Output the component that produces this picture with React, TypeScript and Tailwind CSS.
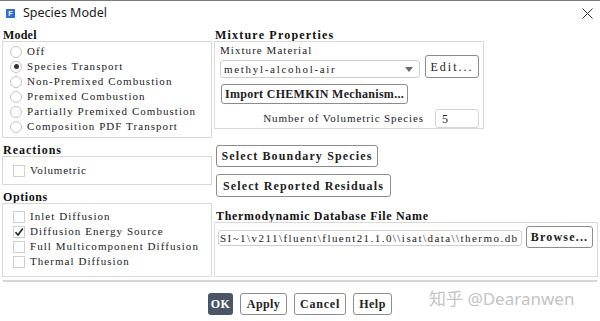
import React from "react";

const txt = "text-[11px] leading-[15px] text-[#222] whitespace-nowrap";

function Radio({ checked, label }: { checked?: boolean; label: string }) {
  return (
    <div className="flex items-center h-[15px]">
      <span className="ml-[7px] w-[12px] h-[12px] rounded-full border border-[#c4c4c4] bg-white flex items-center justify-center">
        {checked && <span className="w-[5px] h-[5px] rounded-full bg-[#333]" />}
      </span>
      <span className={`ml-[5px] tracking-[1.05px] ${txt}`}>{label}</span>
    </div>
  );
}

function Check({
  checked,
  label,
  track = "tracking-[1.05px]",
}: {
  checked?: boolean;
  label: string;
  track?: string;
}) {
  return (
    <div className="flex items-center h-[15px]">
      <span className="ml-[10px] w-[12px] h-[12px] border border-[#cfcfcf] bg-white flex items-center justify-center">
        {checked && (
          <svg width="10" height="10" viewBox="0 0 10 10">
            <path d="M1.5 5.2 L4 8 L8.8 1.5" stroke="#222" strokeWidth="1.6" fill="none" />
          </svg>
        )}
      </span>
      <span className={`ml-[5px] ${track} ${txt}`}>{label}</span>
    </div>
  );
}

function Heading({
  children,
  track,
}: {
  children: React.ReactNode;
  track: string;
}) {
  return (
    <div
      className={`h-[12px] leading-[12px] text-[12px] font-bold text-[#111] pl-[1px] whitespace-nowrap ${track}`}
    >
      {children}
    </div>
  );
}

function Btn({
  children,
  className = "",
}: {
  children: React.ReactNode;
  className?: string;
}) {
  return (
    <div
      className={`flex items-center justify-center border border-[#8c8c8c] rounded-[3px] bg-white text-[#222] whitespace-nowrap ${className}`}
    >
      {children}
    </div>
  );
}

export default function App() {
  return (
    <div className="relative w-[600px] h-[321px] bg-white border-t border-[#7a7a7a] overflow-hidden font-['Liberation_Serif','Times_New_Roman',serif]">
      {/* Title bar */}
      <div className="h-[25px] flex items-center">
        <div className="ml-[6px] w-[9px] h-[9px] bg-[#2f6fd6] flex items-center justify-center text-white text-[7px] font-bold leading-none font-['Liberation_Sans',sans-serif]">
          F
        </div>
        <div className="ml-[8px] text-[12.5px] text-[#1a1a1a] font-['Noto_Sans','Liberation_Sans',sans-serif] leading-none">
          Species Model
        </div>
        <div className="ml-auto mr-[7px]">
          <svg width="11" height="11" viewBox="0 0 11 11">
            <path d="M0.5 0.5 L10.5 10.5 M10.5 0.5 L0.5 10.5" stroke="#333" strokeWidth="1" />
          </svg>
        </div>
      </div>

      {/* Main */}
      <div className="flex pt-[3px] pl-[2px]">
        {/* Left column */}
        <div className="w-[210px] flex flex-col">
          <Heading track="tracking-[0.2px]">Model</Heading>
          <div className="h-[97px] border border-[#d9d9d9] pt-[2px]">
            <Radio label="Off" />
            <Radio checked label="Species Transport" />
            <Radio label="Non-Premixed Combustion" />
            <Radio label="Premixed Combustion" />
            <Radio label="Partially Premixed Combustion" />
            <Radio label="Composition PDF Transport" />
          </div>
          <div className="mt-[6px]">
            <Heading track="tracking-[1px]">Reactions</Heading>
          </div>
          <div className="h-[29px] border border-[#d9d9d9] flex items-center">
            <Check label="Volumetric" track="tracking-[0.8px]" />
          </div>
          <div className="mt-[6px]">
            <Heading track="tracking-[0.6px]">Options</Heading>
          </div>
          <div className="h-[74px] border border-[#d9d9d9] pt-[5px]">
            <Check label="Inlet Diffusion" />
            <Check checked label="Diffusion Energy Source" />
            <Check label="Full Multicomponent Diffusion" />
            <Check label="Thermal Diffusion" />
          </div>
        </div>

        {/* Right column */}
        <div className="ml-[2px] w-[384px] flex flex-col">
          <Heading track="tracking-[1.2px]">Mixture Properties</Heading>
          <div className="w-[270px] h-[88px] border border-[#d9d9d9] flex flex-col">
            <div className="pl-[5px] mt-[2px] text-[11px] tracking-[1.05px] leading-[12px] text-[#222]">
              Mixture Material
            </div>
            <div className="flex items-end pl-[5px] -mt-[1px]">
              <div className="w-[200px] h-[18px] border border-[#cfcfcf] rounded-[3px] bg-white flex items-center pl-[3px] text-[11px] tracking-[1.7px] text-[#222] whitespace-nowrap">
                methyl-alcohol-air
                <svg className="ml-auto mr-[6px]" width="8" height="5" viewBox="0 0 8 5">
                  <path d="M0 0 L8 0 L4 5 Z" fill="#6b6b6b" />
                </svg>
              </div>
              <Btn className="ml-[5px] w-[54px] h-[23px] text-[12px] tracking-[2px]">Edit...</Btn>
            </div>
            <Btn className="ml-[6px] mt-[6px] w-[187px] h-[21px] text-[12px] font-bold tracking-[0.3px]">
              Import CHEMKIN Mechanism...
            </Btn>
            <div className="flex items-center justify-end pr-[4px] mt-[5px]">
              <span className="text-[11px] tracking-[0.9px] text-[#222] whitespace-nowrap">
                Number of Volumetric Species
              </span>
              <div className="ml-[11px] w-[44px] h-[19px] border border-[#d4d4d4] rounded-[3px] flex items-center pl-[6px] text-[12px] text-[#222]">
                5
              </div>
            </div>
          </div>

          <Btn className="mt-[16px] ml-[2px] w-[162px] h-[22px] text-[12px] font-bold tracking-[1.15px]">
            Select Boundary Species
          </Btn>
          <Btn className="mt-[7px] ml-[2px] w-[175px] h-[23px] text-[12px] font-bold tracking-[1.1px]">
            Select Reported Residuals
          </Btn>

          <div className="mt-[13px] ml-[1px]">
            <Heading track="tracking-[0.68px]">Thermodynamic Database File Name</Heading>
          </div>
          <div className="h-[55px] border border-[#d9d9d9] flex items-start pl-[3px] pt-[3px]">
            <div className="mt-[4px] w-[304px] h-[16px] border border-[#cfcfcf] rounded-[3px] flex items-center pl-[1px] text-[11px] tracking-[1.45px] text-[#222] whitespace-nowrap overflow-hidden">
              {"SI~1\\v211\\fluent\\fluent21.1.0\\\\isat\\data\\\\thermo.db"}
            </div>
            <Btn className="ml-[4px] w-[67px] h-[22px] text-[12px] font-bold tracking-[1.2px]">
              Browse...
            </Btn>
          </div>
        </div>
      </div>

      {/* Separator */}
      <div className="mt-[3px] mx-[3px] h-[2px] bg-[#d6d6d6]" />

      {/* Bottom buttons */}
      <div className="mt-[11px] flex justify-center gap-[7px]">
        <div className="w-[25px] h-[22px] rounded-[3px] bg-[#4a5566] text-white text-[12px] tracking-[0.3px] font-bold flex items-center justify-center">
          OK
        </div>
        <Btn className="w-[47px] h-[22px] text-[12px] font-bold tracking-[0.4px]">Apply</Btn>
        <Btn className="w-[52px] h-[22px] text-[12px] font-bold tracking-[0.8px]">Cancel</Btn>
        <Btn className="w-[39px] h-[22px] text-[12px] font-bold tracking-[0.5px]">Help</Btn>
      </div>

      {/* Watermark */}
      <div className="absolute left-[429px] top-[286px] text-[17px] text-[#c4c4c4] font-['Noto_Sans','Noto_Sans_CJK_SC',sans-serif] leading-[22px] whitespace-nowrap">
        <span className="font-['Noto_Sans_CJK_SC',sans-serif]">知乎</span> @Dearanwen
      </div>
    </div>
  );
}
